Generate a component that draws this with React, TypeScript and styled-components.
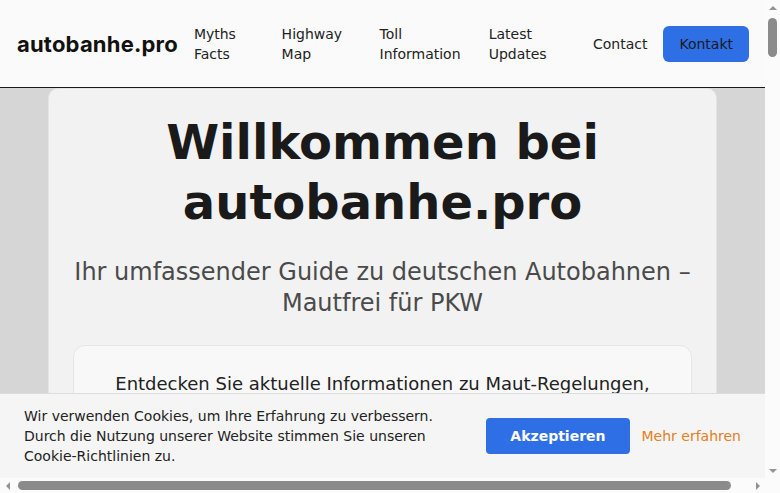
import React from "react";
import styled, { createGlobalStyle } from "styled-components";

const GlobalStyle = createGlobalStyle`
  *, *::before, *::after {
    box-sizing: border-box;
  }
  body {
    margin: 0;
    background: #d6d6d6;
    font-family: "DejaVu Sans", Verdana, sans-serif;
    color: #1a1a1a;
    overflow: hidden;
  }
`;

const navLinks = ["Myths Facts", "Highway Map", "Toll Information", "Latest Updates"];

const myths = [
  { title: "Kein Tempolimit?", text: "Auf rund 30 % des Netzes gelten feste oder variable Geschwindigkeitsbegrenzungen." },
  { title: "Maut für alle?", text: "PKW fahren auf deutschen Autobahnen weiterhin mautfrei – Maut zahlen nur LKW ab 3,5 t." },
  { title: "Richtgeschwindigkeit", text: "Empfohlen sind 130 km/h. Wer schneller fährt, haftet bei Unfällen oft mit." },
  { title: "Rettungsgasse", text: "Bei stockendem Verkehr muss sofort eine Rettungsgasse gebildet werden." },
];

const updates = [
  { date: "12.03.2025", text: "Neue Baustelle auf der A3 zwischen Würzburg und Nürnberg." },
  { date: "04.03.2025", text: "LKW-Maut: aktualisierte Tarife für emissionsarme Fahrzeuge." },
  { date: "25.02.2025", text: "A7: Ausbau auf sechs Fahrstreifen bei Hamburg abgeschlossen." },
];

export default function App() {
  return (
    <>
      <GlobalStyle />
      <Shell>
        <Viewport>
          <Header>
            <Logo>autobanhe.pro</Logo>
            <Nav>
              {navLinks.map((l) => (
                <NavLink key={l} href="#">
                  {l}
                </NavLink>
              ))}
            </Nav>
            <Actions>
              <NavLink href="#">Contact</NavLink>
              <ContactButton>Kontakt</ContactButton>
            </Actions>
          </Header>

          <Main>
            <Card>
              <Title>Willkommen bei autobanhe.pro</Title>
              <Subtitle>Ihr umfassender Guide zu deutschen Autobahnen – Mautfrei für PKW</Subtitle>
              <IntroBox>
                <IntroText>
                  Entdecken Sie aktuelle Informationen zu Maut-Regelungen, Verkehrsregeln und Streckenführung auf
                  Deutschlands Autobahnen. Ob Geschwindigkeit, Baustellen oder Rastplätze – hier finden Sie alles
                  Wichtige für Ihre Fahrt.
                </IntroText>
              </IntroBox>
            </Card>

            <Section>
              <SectionTitle>Mythen &amp; Fakten</SectionTitle>
              <Grid>
                {myths.map((m) => (
                  <Tile key={m.title}>
                    <TileTitle>{m.title}</TileTitle>
                    <TileText>{m.text}</TileText>
                  </Tile>
                ))}
              </Grid>
            </Section>

            <Section>
              <SectionTitle>Aktuelle Updates</SectionTitle>
              <UpdateList>
                {updates.map((u) => (
                  <UpdateRow key={u.date}>
                    <UpdateDate>{u.date}</UpdateDate>
                    <span>{u.text}</span>
                  </UpdateRow>
                ))}
              </UpdateList>
            </Section>
          </Main>

          <Footer>© 2025 autobanhe.pro – Informationen ohne Gewähr</Footer>

          <CookieBar>
            <CookieText>
              Wir verwenden Cookies, um Ihre Erfahrung zu verbessern. Durch die Nutzung unserer Website stimmen Sie
              unseren Cookie-Richtlinien zu.
            </CookieText>
            <CookieActions>
              <AcceptButton>Akzeptieren</AcceptButton>
              <MoreLink href="#">Mehr erfahren</MoreLink>
            </CookieActions>
          </CookieBar>
        </Viewport>

        <ScrollBar $dir="v">
          <Arrow $dir="up" />
          <Track $dir="v">
            <Thumb $dir="v" style={{ height: "8.9%" }} />
          </Track>
          <Arrow $dir="down" />
        </ScrollBar>
        <ScrollBar $dir="h">
          <Arrow $dir="left" />
          <Track $dir="h">
            <Thumb $dir="h" style={{ width: "97.8%" }} />
          </Track>
          <Arrow $dir="right" />
        </ScrollBar>
        <Corner />
      </Shell>
    </>
  );
}

const Shell = styled.div`
  display: grid;
  grid-template-columns: minmax(0, 1fr) 15px;
  grid-template-rows: minmax(0, 1fr) 15px;
  height: 100vh;
`;

const Viewport = styled.div`
  overflow: hidden;
  background: #d6d6d6;
`;

type Dir = { $dir: "v" | "h" };

const ScrollBar = styled.div<Dir>`
  display: flex;
  flex-direction: ${(p) => (p.$dir === "v" ? "column" : "row")};
  background: #fbfbfb;
`;

const Track = styled.div<Dir>`
  flex: 1;
  display: flex;
  flex-direction: ${(p) => (p.$dir === "v" ? "column" : "row")};
  padding: 3px;
`;

const Thumb = styled.div<Dir>`
  flex-shrink: 0;
  ${(p) => (p.$dir === "v" ? "width: 9px;" : "height: 9px;")}
  border-radius: 5px;
  background: #8b8b8b;
`;

const arrowBorders = {
  up: "border-width: 0 4px 4px; border-color: transparent transparent #939393;",
  down: "border-width: 4px 4px 0; border-color: #939393 transparent transparent;",
  left: "border-width: 4px 4px 4px 0; border-color: transparent #939393 transparent transparent;",
  right: "border-width: 4px 0 4px 4px; border-color: transparent transparent transparent #939393;",
};

const Arrow = styled.div<{ $dir: keyof typeof arrowBorders }>`
  flex: 0 0 15px;
  width: 15px;
  height: 15px;
  display: grid;
  place-items: center;

  &::before {
    content: "";
    border-style: solid;
    ${(p) => arrowBorders[p.$dir]}
  }
`;

const Corner = styled.div`
  background: #fbfbfb;
`;

const Header = styled.header`
  display: flex;
  align-items: center;
  gap: 16px;
  height: 88px;
  padding: 0 16px 0 17px;
  background: #fafafa;
  border-bottom: 1px solid #1a1a1a;
`;

const Logo = styled.div`
  flex-shrink: 0;
  font-family: Inter, "Liberation Sans", sans-serif;
  font-weight: 700;
  font-size: 22px;
  letter-spacing: 0.2px;
  color: #111;
`;

const Nav = styled.nav`
  display: flex;
  gap: 19px;
  flex: 1 1 auto;
  min-width: 0;
`;

const NavLink = styled.a`
  flex: 0 1 auto;
  font-size: 14px;
  line-height: 20px;
  color: #222;
  text-decoration: none;
`;

const Actions = styled.div`
  display: flex;
  align-items: center;
  gap: 16px;
  flex-shrink: 0;
`;

const ContactButton = styled.button`
  height: 36px;
  padding: 0 16px;
  border: none;
  border-radius: 6px;
  background: #2f6fe5;
  color: #1a1a1a;
  font-family: inherit;
  font-size: 14px;
`;

const Main = styled.main`
  display: flex;
  flex-direction: column;
  gap: 32px;
  padding: 0 48px 48px;
`;

const Card = styled.section`
  background: #f2f2f2;
  border: 1px solid #e4e4e4;
  border-radius: 10px;
  padding: 24px;
  text-align: center;
`;

const Title = styled.h1`
  margin: 0 0 25px;
  font-size: 48px;
  line-height: 1.24;
  font-weight: 700;
  color: #1a1a1a;
`;

const Subtitle = styled.p`
  margin: 0 0 26px;
  font-size: 24px;
  line-height: 1.3;
  color: #4a4a4a;
`;

const IntroBox = styled.div`
  background: #f8f8f8;
  border: 1px solid #e6e6e6;
  border-radius: 12px;
  padding: 24px;
`;

const IntroText = styled.p`
  margin: 0;
  font-size: 18px;
  line-height: 1.6;
  color: #222;
`;

const Section = styled(Card)`
  text-align: left;
`;

const SectionTitle = styled.h2`
  margin: 0 0 24px;
  font-size: 32px;
  color: #1a1a1a;
`;

const Grid = styled.div`
  display: grid;
  grid-template-columns: repeat(2, 1fr);
  gap: 16px;
`;

const Tile = styled.div`
  background: #f8f8f8;
  border: 1px solid #e6e6e6;
  border-radius: 12px;
  padding: 20px;
`;

const TileTitle = styled.h3`
  margin: 0 0 8px;
  font-size: 18px;
`;

const TileText = styled.p`
  margin: 0;
  font-size: 16px;
  line-height: 1.6;
  color: #333;
`;

const UpdateList = styled.ul`
  list-style: none;
  margin: 0;
  padding: 0;
  display: flex;
  flex-direction: column;
  gap: 12px;
`;

const UpdateRow = styled.li`
  display: flex;
  align-items: center;
  gap: 16px;
  padding: 14px 16px;
  background: #f8f8f8;
  border: 1px solid #e6e6e6;
  border-radius: 10px;
  font-size: 16px;
`;

const UpdateDate = styled.span`
  color: #666;
  font-size: 14px;
`;

const Footer = styled.footer`
  padding: 32px 24px 40px;
  background: #1a1a1a;
  color: #ccc;
  font-size: 14px;
  text-align: center;
`;

const CookieBar = styled.div`
  position: sticky;
  bottom: 0;
  display: flex;
  align-items: center;
  justify-content: space-between;
  gap: 24px;
  padding: 12px 24px;
  background: #f5f5f5;
  border-top: 1px solid #dcdcdc;
`;

const CookieText = styled.p`
  margin: 0;
  max-width: 440px;
  font-size: 14px;
  line-height: 20px;
  color: #222;
`;

const CookieActions = styled.div`
  display: flex;
  align-items: center;
  gap: 12px;
  flex-shrink: 0;
`;

const AcceptButton = styled.button`
  height: 36px;
  padding: 0 24px;
  border: none;
  border-radius: 4px;
  background: #2f6fe5;
  color: #fff;
  font-family: inherit;
  font-weight: 700;
  font-size: 14px;
`;

const MoreLink = styled.a`
  color: #e67e22;
  font-size: 14px;
  text-decoration: none;
`;
